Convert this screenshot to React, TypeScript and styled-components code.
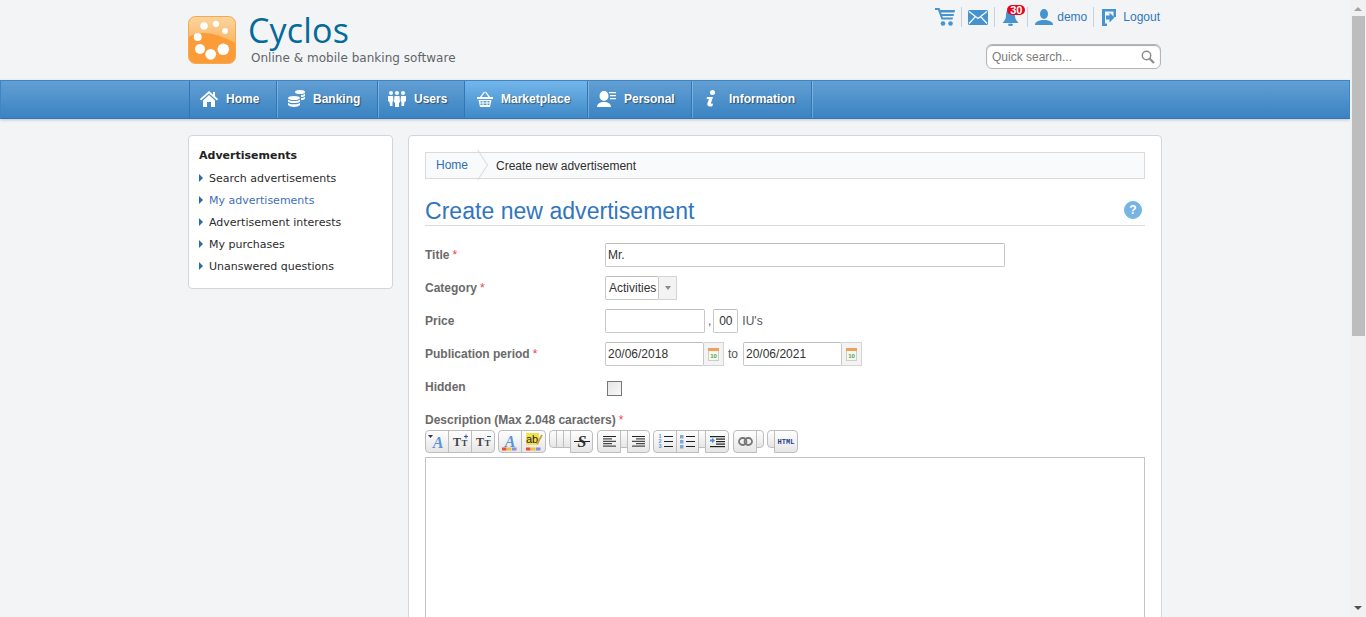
import styled, { createGlobalStyle } from 'styled-components';

const GlobalStyle = createGlobalStyle`
  html, body {
    margin: 0;
    padding: 0;
    height: 100%;
    overflow: hidden;
    background: #f3f4f6;
    font-family: "Liberation Sans", Arial, sans-serif;
  }
`;

const Viewport = styled.div`
  display: flex;
  height: 617px;
  overflow: hidden;
`;

const Page = styled.div`
  flex: 1;
  min-width: 0;
  overflow: hidden;
`;

const Scrollbar = styled.div`
  width: 16px;
  background: #f1f1f1;
  display: flex;
  flex-direction: column;
  align-items: center;
`;

const ScrollThumb = styled.div`
  width: 13px;
  height: 320px;
  background: #bdbdbd;
`;

const ScrollArrowUp = styled.div`
  width: 0;
  height: 0;
  margin: 7px 0 5px;
  border-left: 4px solid transparent;
  border-right: 4px solid transparent;
  border-bottom: 4px solid #a3a3a3;
`;

const ScrollArrowDown = styled.div`
  width: 0;
  height: 0;
  margin-top: auto;
  margin-bottom: 7px;
  border-left: 4px solid transparent;
  border-right: 4px solid transparent;
  border-top: 4px solid #505050;
`;

const Wrap = styled.div`
  width: 974px;
  margin: 0 auto;
`;

const HeaderRow = styled(Wrap)`
  height: 80px;
  display: flex;
  justify-content: space-between;
`;

const Brand = styled.div`
  display: flex;
  padding-top: 16px;
  gap: 15px;
`;

const BrandText = styled.div`
  display: flex;
  flex-direction: column;
`;

const BrandName = styled.div`
  font-family: "Open Sans", sans-serif;
  font-size: 34px;
  line-height: 30px;
  height: 33px;
  margin: -1px 0 1px -3px;
  color: #046a9a;
  letter-spacing: 0.2px;
`;

const BrandTag = styled.div`
  font-family: "DejaVu Sans", sans-serif;
  font-size: 12px;
  line-height: 16px;
  margin-top: 1px;
  color: #5f6468;
  letter-spacing: 0.03px;
`;

const HeaderRight = styled.div`
  display: flex;
  flex-direction: column;
  align-items: flex-end;
  width: 240px;
`;

const TopLinks = styled.div`
  display: flex;
  align-items: center;
  height: 20px;
  margin-top: 7px;
`;

const TopLink = styled.div<{ $sep?: boolean; $l: number; $r: number; $gap?: number }>`
  display: flex;
  align-items: center;
  gap: ${p => p.$gap ?? 0}px;
  height: 20px;
  padding: 0 ${p => p.$r}px 0 ${p => p.$l}px;
  font-size: 12px;
  color: #2f79b9;
  border-right: ${p => (p.$sep ? '1px solid #c3d2df' : 'none')};
  position: relative;
`;

const Badge = styled.span`
  position: absolute;
  top: -2px;
  left: 12px;
  min-width: 18px;
  height: 10px;
  line-height: 10px;
  border-radius: 5px;
  background: #e5061c;
  color: #fff;
  font-size: 11px;
  font-weight: bold;
  text-align: center;
`;

const Search = styled.div`
  width: 175px;
  height: 25px;
  box-sizing: border-box;
  margin: 17px 1px 0 0;
  padding: 0 5px;
  display: flex;
  align-items: center;
  justify-content: space-between;
  background: #fff;
  border: 1px solid #b5b5b5;
  border-radius: 6px;
  box-shadow: inset 0 1px 1px #aaa;
  font-size: 12px;
  color: #7b7b7b;
`;

const NavBar = styled.div`
  height: 39px;
  box-sizing: border-box;
  background: linear-gradient(#629fd3, #3a83c3);
  border: 1px solid #3d86c6;
  border-bottom-color: #2f77b6;
  box-shadow: 0 1px 3px rgba(0, 0, 0, 0.2);
`;

const NavInner = styled(Wrap)`
  display: flex;
  width: 973px;
  padding-left: 1px;
  height: 37px;
`;

const NavItem = styled.div<{ $active?: boolean; $first?: boolean; $w: number; $pad: number; $gap: number }>`
  display: flex;
  align-items: center;
  gap: ${p => p.$gap}px;
  box-sizing: border-box;
  width: ${p => p.$w}px;
  padding: 0 0 2px ${p => p.$pad}px;
  height: 37px;
  font-size: 12px;
  font-weight: bold;
  color: #fff;
  text-shadow: 1px 1px 1px rgba(0, 0, 0, 0.45);
  background: ${p => (p.$active ? 'linear-gradient(#72b6ea, #4089c8)' : 'none')};
  border-right: 1px solid #2f77b6;
  box-shadow: 1px 0 0 rgba(255, 255, 255, 0.25);
  border-left: ${p => (p.$first ? '1px solid #2f77b6' : 'none')};
`;

const Content = styled(Wrap)`
  display: flex;
  align-items: flex-start;
  gap: 15px;
  padding-top: 16px;
`;

const Card = styled.div`
  background: #fff;
  border: 1px solid #d3d5d8;
  border-radius: 4px;
  box-sizing: border-box;
`;

const Side = styled(Card)`
  width: 205px;
  height: 154px;
  padding: 12px 10px;
  font-family: "DejaVu Sans", Verdana, sans-serif;
`;

const SideTitle = styled.div`
  font-size: 11px;
  font-weight: bold;
  line-height: 16px;
  color: #222;
  margin-bottom: 3px;
`;

const SideItem = styled.div<{ $active?: boolean }>`
  display: flex;
  align-items: center;
  gap: 6px;
  height: 22px;
  font-size: 11px;
  color: ${p => (p.$active ? '#3f70b5' : '#2c2c2c')};
  &::before {
    content: '';
    border-left: 4px solid #2a6da8;
    border-top: 4px solid transparent;
    border-bottom: 4px solid transparent;
  }
`;

const Main = styled(Card)`
  width: 754px;
  height: 520px;
  padding: 16px 16px 0;
`;

const Crumbs = styled.div`
  display: flex;
  align-items: center;
  height: 27px;
  box-sizing: border-box;
  border: 1px solid #d8dadc;
  background: #f9fafb;
  font-size: 12px;
  color: #2f2f2f;
`;

const CrumbHome = styled.div`
  position: relative;
  height: 25px;
  line-height: 25px;
  padding: 0 10px;
  margin-right: 18px;
  color: #2f6fb4;
  &::after {
    content: '';
    position: absolute;
    top: 3px;
    right: -9px;
    width: 18px;
    height: 18px;
    box-sizing: border-box;
    border-top: 1px solid #d8dadc;
    border-right: 1px solid #d8dadc;
    transform: rotate(45deg) skew(12deg, 12deg);
  }
`;

const TitleRow = styled.div`
  display: flex;
  align-items: center;
  justify-content: space-between;
  height: 47px;
  box-sizing: border-box;
  border-bottom: 1px solid #d8dadc;
  padding-top: 18px;
  margin-bottom: 17px;
`;

const Title = styled.h1`
  margin: 0;
  font-size: 23px;
  font-weight: normal;
  letter-spacing: 0.04px;
  color: #3175c1;
`;

const HelpWrap = styled.div`
  display: flex;
  margin: 0 3px 3px 0;
`;

const FormRow = styled.div`
  display: flex;
  align-items: center;
  height: 24px;
  margin-bottom: 9px;
`;

const Label = styled.div`
  width: 180px;
  font-size: 12px;
  font-weight: bold;
  color: #6a6a6a;
`;

const Req = styled.span`
  color: #f0434f;
  font-weight: normal;
  margin-left: 3px;
`;

const Input = styled.div<{ $w: number; $pad?: number; $center?: boolean }>`
  width: ${p => p.$w}px;
  height: 24px;
  box-sizing: border-box;
  padding: 0 ${p => p.$pad ?? 2}px;
  line-height: 22px;
  border: 1px solid #c8c8c8;
  border-top-color: #bdbdbd;
  border-radius: 2px;
  font-size: 12px;
  color: #333;
  background: #fff;
  text-align: ${p => (p.$center ? 'center' : 'left')};
`;

const AddonButton = styled.div<{ $w?: number }>`
  width: ${p => p.$w ?? 20}px;
  height: 24px;
  box-sizing: border-box;
  display: flex;
  align-items: center;
  justify-content: center;
  border: 1px solid #d4d4d4;
  border-left: none;
  background: #f3f3f3;
`;

const SelectArrow = styled.span`
  border-left: 3.5px solid transparent;
  border-right: 3.5px solid transparent;
  border-top: 4px solid #8a8a8a;
`;

const Plain = styled.span<{ $l: number; $r?: number }>`
  font-size: 12px;
  color: #555;
  margin: 0 ${p => p.$r ?? 0}px 0 ${p => p.$l}px;
`;

const Check = styled.div`
  width: 15px;
  height: 15px;
  box-sizing: border-box;
  margin: 3px 0 0 2px;
  border: 1px solid #777;
  background: linear-gradient(135deg, #e6e6e6, #f8f8f8);
`;

const DescLabel = styled(Label)`
  width: auto;
  margin-top: 14px;
  line-height: 14px;
`;

const Toolbar = styled.div`
  display: flex;
  align-items: flex-start;
  height: 23px;
  margin-top: 3px;
`;

const ToolGroup = styled.div<{ $ml?: number }>`
  display: flex;
  align-items: flex-start;
  margin-left: ${p => p.$ml ?? 3}px;
  &:first-child {
    margin-left: 0;
  }
`;

const Tool = styled.div<{ $w?: number; $lift?: boolean }>`
  width: ${p => p.$w ?? 24}px;
  height: ${p => (p.$lift ? 18 : 23)}px;
  box-sizing: border-box;
  display: flex;
  align-items: center;
  justify-content: center;
  border: 1px solid #bdbdbd;
  margin-left: -1px;
  background: linear-gradient(#fefefe, #e6e6e6);
  position: relative;
  &:first-child {
    margin-left: 0;
    border-top-left-radius: 4px;
    border-bottom-left-radius: 4px;
  }
  &:last-child {
    border-top-right-radius: 4px;
    border-bottom-right-radius: 4px;
  }
`;

const Editor = styled.div`
  height: 200px;
  border: 1px solid #c4c4c4;
  background: #fff;
  margin-top: 4px;
`;

const blue = '#4593d0';

function CartIcon() {
  return (
    <svg width="20" height="18" viewBox="0 0 20 18" fill={blue}>
      <path d="M0 0h4.500l.8 2H20l-.5 2.500H6.100l.5 1.500H19l-.5 2H7.300l.5 1.500H18l-.5 2H6.500L3 2H0z" />
      <circle cx="8" cy="15.500" r="2.300" />
      <circle cx="15.500" cy="15.500" r="2.300" />
    </svg>
  );
}

function MailIcon() {
  return (
    <svg width="20" height="15" viewBox="0 0 20 15">
      <rect width="20" height="15" rx="1.500" fill={blue} />
      <path d="M1 1.500l9 7 9-7M1 13.500l6.500-7M19 13.500l-6.500-7" stroke="#fff" strokeWidth="1.200" fill="none" />
    </svg>
  );
}

function BellIcon() {
  return (
    <svg width="17" height="17" viewBox="0 0 17 17" fill={blue}>
      <path d="M8.500 0C12 0 13 3 13 7c0 3 1.500 4.500 3.500 7H.5C2.500 11.500 4 10 4 7 4 3 5 0 8.500 0z" />
      <ellipse cx="8.500" cy="15.800" rx="2.500" ry="1.200" />
    </svg>
  );
}

function UserIcon() {
  return (
    <svg width="18" height="16" viewBox="0 0 18 16" fill={blue}>
      <ellipse cx="9" cy="5" rx="4" ry="5" />
      <path d="M0 16c0-3 3-4 6.500-5h5c3.500 1 6.500 2 6.500 5z" />
    </svg>
  );
}

function LogoutIcon() {
  return (
    <svg width="14" height="17" viewBox="0 0 14 17" fill={blue}>
      <path d="M0 0h14v8h-2.500V2.500H3v12h2V17H0z" />
      <path d="M4 6.500h3.500V3.500l5 5-5 5v-3H4z" />
    </svg>
  );
}

function SearchIcon() {
  return (
    <svg width="14" height="14" viewBox="0 0 14 14" fill="none" stroke="#8d8d8d">
      <circle cx="5.500" cy="5.500" r="4.200" strokeWidth="1.500" />
      <path d="M8.500 8.500L13 13" strokeWidth="2.200" />
    </svg>
  );
}

function Logo() {
  return (
    <svg width="48" height="48" viewBox="0 0 48 48">
      <defs>
        <linearGradient id="lg" x1="0" y1="0" x2="0" y2="1">
          <stop offset="0" stopColor="#fbd6a0" />
          <stop offset="0.5" stopColor="#fbb868" />
        </linearGradient>
      </defs>
      <rect x="0.500" y="0.500" width="47" height="47" rx="7" fill="url(#lg)" stroke="#f5a84e" />
      <path d="M1 21C10 15 25 15 47 27V41a6 6 0 0 1-6 6H7a6 6 0 0 1-6-6z" fill="#fb9c38" />
      {[
        [16, 10, 3.700], [28, 8, 3], [37, 15, 2.900], [9.700, 21, 4],
        [12, 33, 5], [22.700, 38.300, 5.400], [35.300, 33.300, 5.800],
      ].map(([cx, cy, r]) => (
        <circle key={cx} cx={cx} cy={cy} r={r} fill="#fff" />
      ))}
    </svg>
  );
}

function HomeIcon() {
  return (
    <svg width="18" height="16" viewBox="0 0 18 16" fill="#fff">
      <path d="M9 0l9 8-1 1.500L9 2.500 1 9.500 0 8z" />
      <path d="M3 9.500L9 4l6 5.500V16h-4v-5H7v5H3z" />
      <rect x="13" y="1" width="2" height="4" />
    </svg>
  );
}

function CoinsIcon() {
  return (
    <svg width="17" height="17" viewBox="0 0 17 17" fill="#fff">
      <ellipse cx="6" cy="8" rx="6" ry="2" />
      <path d="M0 9.500c2 2 10 2 12 0v2c-2 2-10 2-12 0zM0 12.800c2 2 10 2 12 0V15c-2 2.500-10 2.500-12 0z" />
      <ellipse cx="12" cy="2" rx="5" ry="2" />
      <path d="M13 5c2 0 3-.5 4-1.500V5.500c-1 1-2 1.500-4 1.500zM13 8c2 0 3-.5 4-1.500v2c-1 1-2 1.500-4 1.500z" />
    </svg>
  );
}

function UsersIcon() {
  return (
    <svg width="18" height="16" viewBox="0 0 18 16" fill="#fff">
      <circle cx="3" cy="2" r="2" />
      <circle cx="9" cy="2" r="2" />
      <circle cx="15" cy="2" r="2" />
      <path d="M0 5h5l.5 5-1 1V15H2l-.500-4L0 10zM13 5h5v5l-1.500 1-.5 4h-2.500v-4l-1-1z" />
      <path d="M6.500 5h5L12 11l-1 1v4H7v-4l-1-1z" />
    </svg>
  );
}

function BasketIcon() {
  return (
    <svg width="16" height="16" viewBox="0 0 16 16" fill="#fff">
      <path d="M3 6l4-5.500 1 .7L4.500 6zM13 6L9 .5l-1 .7L11.500 6z" />
      <path d="M0 6h16v2H0zM1.500 9h13L13 16H3zm2 1v1.500h2V10zm3 0v1.500h3V10zm4 0v1.500h2V10zm-7 2.500V14h2v-1.500zm3 0V14h3v-1.500zm4 0V14h2v-1.500z" fillRule="evenodd" />
    </svg>
  );
}

function PersonIcon() {
  return (
    <svg width="20" height="16" viewBox="0 0 20 16" fill="#fff">
      <ellipse cx="7" cy="5" rx="4.500" ry="5" />
      <path d="M0 16c0-3 2-4 5-5h4c3 1 5 2 5 5z" />
      <path d="M12 1h7v1.300h-7zM13 4h6v1.300h-6zM13 7h6v1.300h-6z" />
    </svg>
  );
}

function InfoIcon() {
  return (
    <svg width="10" height="17" viewBox="0 0 10 17" fill="#fff">
      <circle cx="6.500" cy="2.500" r="2.500" />
      <path d="M1 7h6L5 13c0 1 1 1 2 .5L6.500 16c-2 1-6 1-5-3L3 9H.5z" />
    </svg>
  );
}

function HelpIcon() {
  return (
    <svg width="18" height="18" viewBox="0 0 18 18">
      <circle cx="9" cy="9" r="8.500" fill="#79b2e4" stroke="#63bfe0" />
      <text x="9" y="13" textAnchor="middle" fontSize="12" fontWeight="bold" fill="#fff" fontFamily="Liberation Sans">?</text>
    </svg>
  );
}

function CalendarIcon() {
  return (
    <svg width="11" height="13" viewBox="0 0 11 13">
      <rect x="0.500" y="0.500" width="10" height="12" fill="#f4f8ee" stroke="#c8cfc4" />
      <rect x="0" y="0" width="11" height="3" fill="#f0a05a" />
      <text x="5.500" y="10" textAnchor="middle" fontSize="6" fontWeight="bold" fill="#5aa05a" fontFamily="Liberation Sans">10</text>
    </svg>
  );
}

function AlignIcon({ right }: { right?: boolean }) {
  const rows = [13, 9, 13, 9, 13];
  return (
    <svg width="13" height="11" viewBox="0 0 13 11" fill="#222">
      {rows.map((w, i) => (
        <rect key={i} x={right ? 13 - w : 0} y={i * 2.400} width={w} height="1" />
      ))}
    </svg>
  );
}

function FontIcon({ kind }: { kind: 'A' | 'up' | 'down' | 'color' | 'bg' }) {
  if (kind === 'A') {
    return (
      <svg width="20" height="20" viewBox="0 0 20 20" overflow="visible">
        <path d="M1 3h5L3.500 6z" fill="#335" />
        <text x="11" y="16" textAnchor="middle" fontSize="16" fontWeight="bold" fontStyle="italic" fill="#5a95d8" fontFamily="Liberation Serif">A</text>
      </svg>
    );
  }
  if (kind === 'up' || kind === 'down') {
    return (
      <svg width="17" height="15" viewBox="0 0 17 15" fill="#444">
        <text x="5" y="12" textAnchor="middle" fontSize="12" fontWeight="bold" fontFamily="Liberation Serif">T</text>
        <text x="12.500" y="12" textAnchor="middle" fontSize="9" fontWeight="bold" fontFamily="Liberation Serif">T</text>
        <rect x="12" y="2" width="4" height="1" fill="#2a5a9a" />
        {kind === 'up' && <rect x="13.500" y="0.500" width="1" height="4" fill="#2a5a9a" />}
      </svg>
    );
  }
  const bars = ['#e84d3d', '#f0c030', '#8c8ce0'];
  return (
    <svg width="20" height="20" viewBox="0 0 20 20">
      {kind === 'color' ? (
        <text x="10" y="14.500" textAnchor="middle" fontSize="16" fontWeight="bold" fontStyle="italic" fill="#5a95d8" fontFamily="Liberation Serif">A</text>
      ) : (
        <>
          <rect x="2" y="1" width="13" height="12" fill="#f3e04a" />
          <text x="8" y="11" textAnchor="middle" fontSize="11" fill="#222" fontFamily="Liberation Sans">ab</text>
          <path d="M13 12l5-9" stroke="#c8a050" strokeWidth="1.800" />
        </>
      )}
      {bars.map((c, i) => (
        <rect key={c} x={i * 5 + 2} y="15.500" width="4.500" height="3" fill={c} />
      ))}
    </svg>
  );
}

function StrikeIcon() {
  return (
    <svg width="18" height="19" viewBox="0 0 18 19">
      <text x="9" y="14.500" textAnchor="middle" fontSize="16" fontStyle="italic" fontWeight="bold" fill="#333" fontFamily="Liberation Serif">S</text>
      <rect x="1" y="9" width="16" height="1" fill="#222" />
    </svg>
  );
}

function ListIcon({ ordered }: { ordered?: boolean }) {
  return (
    <svg width="15" height="15" viewBox="0 0 15 15" fill="#222">
      {[1, 6, 11].map((y, i) => (
        <g key={y}>
          <rect x="6" y={y + 1} width="9" height="1" />
          {ordered ? (
            <text x="2" y={y + 3} fontSize="5.500" fontWeight="bold" fill="#5a95d8" fontFamily="Liberation Sans" textAnchor="middle">{i + 1}</text>
          ) : (
            <rect x="0" y={y} width="3.500" height="3.500" fill="#7fa8d8" />
          )}
        </g>
      ))}
    </svg>
  );
}

function IndentIcon() {
  return (
    <svg width="15" height="12" viewBox="0 0 15 12" fill="#222">
      <rect x="0" y="0" width="15" height="1.200" />
      <rect x="6" y="2.500" width="9" height="1.200" />
      <rect x="6" y="5" width="9" height="1.200" />
      <rect x="6" y="7.500" width="9" height="1.200" />
      <rect x="0" y="10" width="15" height="1.200" />
      <path d="M0 3.500h2V1.800l3 2.700-3 2.700V5.500H0z" fill="#4a90d8" />
    </svg>
  );
}

function LinkIcon() {
  return (
    <svg width="15" height="9" viewBox="0 0 15 9" fill="none" stroke="#777" strokeWidth="1.800">
      <rect x="1" y="1" width="7.500" height="7" rx="3.500" />
      <rect x="6.500" y="1" width="7.500" height="7" rx="3.500" />
    </svg>
  );
}

const HtmlText = styled.span`
  font-family: "Liberation Mono", monospace;
  font-size: 7px;
  font-weight: bold;
  color: #1f3f8f;
`;

const navItems = [
  { label: 'Home', icon: <HomeIcon />, w: 88, pad: 10, gap: 8 },
  { label: 'Banking', icon: <CoinsIcon />, w: 101, pad: 11, gap: 8 },
  { label: 'Users', icon: <UsersIcon />, w: 87, pad: 10, gap: 8 },
  { label: 'Marketplace', icon: <BasketIcon />, w: 123, pad: 12, gap: 8, active: true },
  { label: 'Personal', icon: <PersonIcon />, w: 104, pad: 9, gap: 7 },
  { label: 'Information', icon: <InfoIcon />, w: 120, pad: 14, gap: 13 },
];

const sideItems = ['Search advertisements', 'My advertisements', 'Advertisement interests', 'My purchases', 'Unanswered questions'];

export default function App() {
  return (
    <>
      <GlobalStyle />
      <Viewport>
        <Page>
          <HeaderRow>
            <Brand>
              <Logo />
              <BrandText>
                <BrandName>Cyclos</BrandName>
                <BrandTag>Online &amp; mobile banking software</BrandTag>
              </BrandText>
            </Brand>
            <HeaderRight>
              <TopLinks>
                <TopLink $sep $l={0} $r={6}><CartIcon /></TopLink>
                <TopLink $sep $l={6} $r={6}><MailIcon /></TopLink>
                <TopLink $sep $l={7} $r={8}><BellIcon /><Badge>30</Badge></TopLink>
                <TopLink $sep $l={7} $r={6} $gap={4}><UserIcon />demo</TopLink>
                <TopLink $l={8} $r={2} $gap={7}><LogoutIcon />Logout</TopLink>
              </TopLinks>
              <Search>Quick search...<SearchIcon /></Search>
            </HeaderRight>
          </HeaderRow>
          <NavBar>
            <NavInner>
              {navItems.map((n, i) => (
                <NavItem key={n.label} $active={n.active} $first={i === 0} $w={n.w} $pad={n.pad} $gap={n.gap}>
                  {n.icon}
                  {n.label}
                </NavItem>
              ))}
            </NavInner>
          </NavBar>
          <Content>
            <Side>
              <SideTitle>Advertisements</SideTitle>
              {sideItems.map((s, i) => (
                <SideItem key={s} $active={i === 1}>{s}</SideItem>
              ))}
            </Side>
            <Main>
              <Crumbs>
                <CrumbHome>Home</CrumbHome>
                Create new advertisement
              </Crumbs>
              <TitleRow>
                <Title>Create new advertisement</Title>
                <HelpWrap><HelpIcon /></HelpWrap>
              </TitleRow>
              <FormRow>
                <Label>Title<Req>*</Req></Label>
                <Input $w={400}>Mr.</Input>
              </FormRow>
              <FormRow>
                <Label>Category<Req>*</Req></Label>
                <Input $w={54} $pad={3}>Activities</Input>
                <AddonButton $w={18}><SelectArrow /></AddonButton>
              </FormRow>
              <FormRow>
                <Label>Price</Label>
                <Input $w={100} />
                <Plain $l={3} $r={2}>,</Plain>
                <Input $w={25} $center>00</Input>
                <Plain $l={4}>IU's</Plain>
              </FormRow>
              <FormRow>
                <Label>Publication period<Req>*</Req></Label>
                <Input $w={99}>20/06/2018</Input>
                <AddonButton><CalendarIcon /></AddonButton>
                <Plain $l={4} $r={5}>to</Plain>
                <Input $w={99}>20/06/2021</Input>
                <AddonButton><CalendarIcon /></AddonButton>
              </FormRow>
              <FormRow>
                <Label>Hidden</Label>
                <Check />
              </FormRow>
              <DescLabel>Description (Max 2.048 caracters)<Req>*</Req></DescLabel>
              <Toolbar>
                <ToolGroup>
                  <Tool><FontIcon kind="A" /></Tool>
                  <Tool><FontIcon kind="up" /></Tool>
                  <Tool><FontIcon kind="down" /></Tool>
                </ToolGroup>
                <ToolGroup>
                  <Tool><FontIcon kind="color" /></Tool>
                  <Tool $w={25}><FontIcon kind="bg" /></Tool>
                </ToolGroup>
                <ToolGroup>
                  <Tool $w={8} $lift />
                  <Tool $w={8} $lift />
                  <Tool $w={8} $lift />
                  <Tool $w={23}><StrikeIcon /></Tool>
                </ToolGroup>
                <ToolGroup $ml={4}>
                  <Tool><AlignIcon /></Tool>
                  <Tool $w={8} $lift />
                  <Tool $w={23}><AlignIcon right /></Tool>
                </ToolGroup>
                <ToolGroup>
                  <Tool><ListIcon ordered /></Tool>
                  <Tool $w={23}><ListIcon /></Tool>
                  <Tool $w={8} $lift />
                  <Tool><IndentIcon /></Tool>
                </ToolGroup>
                <ToolGroup $ml={4}>
                  <Tool><LinkIcon /></Tool>
                  <Tool $w={8} $lift />
                </ToolGroup>
                <ToolGroup>
                  <Tool $w={8} $lift />
                  <Tool><HtmlText>HTML</HtmlText></Tool>
                </ToolGroup>
              </Toolbar>
              <Editor />
            </Main>
          </Content>
        </Page>
        <Scrollbar>
          <ScrollArrowUp />
          <ScrollThumb />
          <ScrollArrowDown />
        </Scrollbar>
      </Viewport>
    </>
  );
}
